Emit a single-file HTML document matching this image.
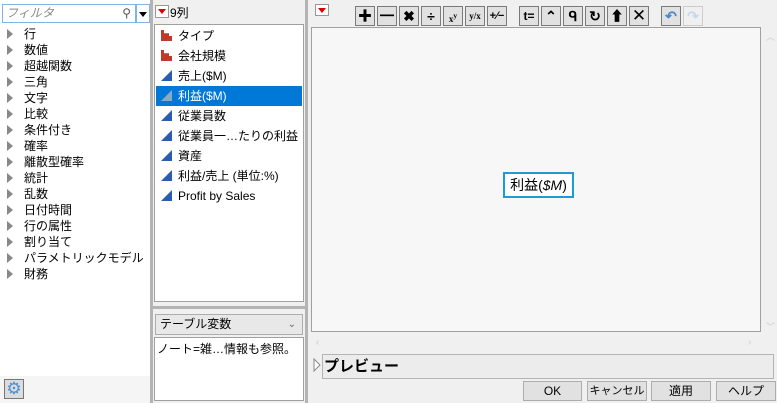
<!DOCTYPE html>
<html><head><meta charset="utf-8"><style>
*{box-sizing:border-box;margin:0;padding:0}
html,body{width:777px;height:403px;overflow:hidden}
body{background:#f0f0f0;font-family:"Liberation Sans","Noto Sans CJK JP",sans-serif;font-size:12px;color:#000;position:relative}
.a{position:absolute}
.tree div{position:absolute;left:7px;height:16px;line-height:16px;white-space:nowrap}
.tree div:before{content:"";display:inline-block;border-left:6px solid #888;border-top:5px solid transparent;border-bottom:5px solid transparent;margin-right:11px;vertical-align:-1px}
.lst div{position:absolute;left:1px;width:146px;height:20px;line-height:20px;padding-left:5px;white-space:nowrap}
.bar{display:inline-block;width:11px;height:11px;vertical-align:-1px;margin-right:6px;position:relative}
.tb{position:absolute;top:6px;width:20px;height:20px;border:1px solid #7a7a7a;background:#e1e1e1;font-weight:bold;text-align:center;line-height:18px;font-size:14px}
.btn{position:absolute;top:381px;height:20px;border:1px solid #adadad;background:#e1e1e1;text-align:center;line-height:18px;font-size:12px;white-space:nowrap;overflow:hidden}
</style></head><body>
<div class="a" style="left:0;top:0;width:150px;height:403px;background:#fff"></div>
<div class="a" style="left:0;top:376px;width:150px;height:27px;background:#f5f5f5"></div>
<div class="a" style="left:2px;top:4px;width:134px;height:19px;border:1px solid #7eb4ea;background:#fff;color:#888;font-style:italic;padding-left:3px;line-height:17px">フィルタ<span style="position:absolute;right:4px;top:0;color:#555;font-style:normal">⚲</span></div>
<div class="a" style="left:136px;top:4px;width:14px;height:19px;border:1px solid #7eb4ea;background:#fff"><div class="a" style="left:2px;top:7px;border-top:5px solid #000;border-left:4px solid transparent;border-right:4px solid transparent"></div></div>
<div class="tree">
<div style="top:26px">行</div><div style="top:42px">数値</div><div style="top:58px">超越関数</div><div style="top:74px">三角</div><div style="top:90px">文字</div><div style="top:106px">比較</div><div style="top:122px">条件付き</div><div style="top:138px">確率</div><div style="top:154px">離散型確率</div><div style="top:170px">統計</div><div style="top:186px">乱数</div><div style="top:202px">日付時間</div><div style="top:218px">行の属性</div><div style="top:234px">割り当て</div><div style="top:250px">パラメトリックモデル</div><div style="top:266px">財務</div>
</div>
<div class="a" style="left:4px;top:379px;width:20px;height:20px;border:1px solid #777;background:#dcdcdc;color:#4a90d9;font-size:17px;line-height:18px;text-align:center">⚙</div>
<div class="a" style="left:150px;top:0;width:3px;height:403px;background:#b4b4b4"></div>
<div class="a" style="left:305px;top:0;width:3px;height:403px;background:#b4b4b4"></div>
<div class="a" style="left:155px;top:5px;width:14px;height:13px;border:1px solid #999;background:#fff"><div class="a" style="left:2px;top:3px;border-top:5px solid #d00;border-left:4px solid transparent;border-right:4px solid transparent"></div></div>
<div class="a" style="left:170px;top:5px;line-height:16px">9列</div>
<div class="a lst" style="left:154px;top:24px;width:150px;height:278px;border:1px solid #a0a0a0;background:#fff">
<div style="top:1px"><span class="bar" style="background:#c0392b;clip-path:polygon(0 0,3px 0,3px 30%,8px 30%,8px 55%,11px 55%,11px 100%,0 100%)"></span>タイプ</div>
<div style="top:21px"><span class="bar" style="background:#c0392b;clip-path:polygon(0 0,3px 0,3px 30%,8px 30%,8px 55%,11px 55%,11px 100%,0 100%)"></span>会社規模</div>
<div style="top:41px"><span class="bar" style="background:#2a5db0;clip-path:polygon(100% 0,100% 100%,0 100%)"></span>売上($M)</div>
<div style="top:61px;background:#0078d7;color:#fff"><span class="bar" style="background:#8aa8c8;clip-path:polygon(100% 0,100% 100%,0 100%)"></span>利益($M)</div>
<div style="top:81px"><span class="bar" style="background:#2a5db0;clip-path:polygon(100% 0,100% 100%,0 100%)"></span>従業員数</div>
<div style="top:101px"><span class="bar" style="background:#2a5db0;clip-path:polygon(100% 0,100% 100%,0 100%)"></span>従業員一…たりの利益</div>
<div style="top:121px"><span class="bar" style="background:#2a5db0;clip-path:polygon(100% 0,100% 100%,0 100%)"></span>資産</div>
<div style="top:141px"><span class="bar" style="background:#2a5db0;clip-path:polygon(100% 0,100% 100%,0 100%)"></span>利益/売上 (単位:%)</div>
<div style="top:161px"><span class="bar" style="background:#2a5db0;clip-path:polygon(100% 0,100% 100%,0 100%)"></span>Profit by Sales</div>
</div>
<div class="a" style="left:153px;top:306px;width:152px;height:3px;background:#b4b4b4"></div>
<div class="a" style="left:155px;top:314px;width:148px;height:21px;border:1px solid #adadad;background:#e8e8e8;padding-left:4px;line-height:19px">テーブル変数<span style="position:absolute;right:6px;color:#666;font-size:10px">⌄</span></div>
<div class="a" style="left:154px;top:337px;width:150px;height:64px;border:1px solid #a0a0a0;background:#fff;padding:3px 2px;line-height:16px;white-space:nowrap;overflow:hidden">ノート=雑…情報も参照。</div>
<div class="a" style="left:315px;top:4px;width:14px;height:12px;border:1px solid #999;background:#fff"><div class="a" style="left:2px;top:3px;border-top:5px solid #d00;border-left:4px solid transparent;border-right:4px solid transparent"></div></div>
<div class="tb" style="left:355px">✚</div><div class="tb" style="left:377px">━</div><div class="tb" style="left:399px">✖</div><div class="tb" style="left:421px">÷</div><div class="tb" style="left:443px;font-size:9px;font-family:'Liberation Serif',serif">x<sup>y</sup></div><div class="tb" style="left:465px;font-size:9px;font-family:'Liberation Serif',serif">y/x</div><div class="tb" style="left:487px;font-size:11px">+⁄−</div>
<div class="tb" style="left:519px;font-size:12px">t=</div><div class="tb" style="left:541px">⌃</div><div class="tb" style="left:563px">ᑫ</div><div class="tb" style="left:585px">↻</div><div class="tb" style="left:607px">⬆</div><div class="tb" style="left:629px;font-weight:normal;font-size:17px">✕</div>
<div class="tb" style="left:661px;color:#4a86c8">↶</div><div class="tb" style="left:683px;color:#c8d8e8;border-color:#ccc;background:#f0f0f0">↷</div>
<div class="a" style="left:311px;top:27px;width:450px;height:305px;border:1px solid #a0a0a0;background:#f7f7f7"></div>
<div class="a" style="left:766px;top:30px;color:#ccc;font-size:9px">︿</div>
<div class="a" style="left:766px;top:320px;color:#ccc;font-size:9px">﹀</div>
<div class="a" style="left:316px;top:337px;color:#ccc;font-size:10px">‹</div>
<div class="a" style="left:748px;top:337px;color:#ccc;font-size:10px">›</div>
<div class="a" style="left:503px;top:172px;width:71px;height:26px;border:2px solid #1e9bd7;background:#fff;text-align:center;line-height:22px;font-size:14px;white-space:nowrap">利益(<i>$M</i>)</div>
<div class="a" style="left:313px;top:358px;width:8px;height:14px"><svg width="8" height="14"><path d="M1 1 L7 7 L1 13 Z" fill="#fff" stroke="#888"/></svg></div>
<div class="a" style="left:322px;top:354px;width:452px;height:25px;border:1px solid #b4b4b4;background:#ececec;font-weight:bold;font-size:15px;line-height:23px;padding-left:1px">プレビュー</div>
<div class="btn" style="left:523px;width:59px">OK</div>
<div class="btn" style="left:587px;width:60px;font-size:11px">キャンセル</div>
<div class="btn" style="left:651px;width:60px">適用</div>
<div class="btn" style="left:716px;width:60px">ヘルプ</div>
</body></html>
